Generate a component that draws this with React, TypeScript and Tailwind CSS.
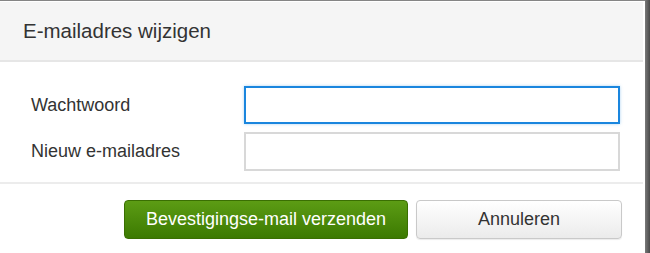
import React from "react";

export default function App() {
  const font = { fontFamily: '"Liberation Sans", Arial, sans-serif' };
  return (
    <div className="w-[650px] h-[253px] flex bg-white overflow-hidden" style={font}>
      <div className="w-[645px] h-full flex flex-col border-t border-[#858585] bg-white pr-[2px]">
        <div className="h-[60px] mt-[1px] bg-[#f5f5f5] border-b-2 border-[#e6e6e6] flex items-center pl-[23px]">
          <span className="text-[20.5px] text-[#333] leading-none">E-mailadres wijzigen</span>
        </div>
        <div className="pt-[24px] pl-[31px] pb-[11px] border-b-2 border-[#ececec] grid grid-cols-[213px_376px] gap-y-[8px] items-center">
          <label className="text-[18px] text-[#333]">Wachtwoord</label>
          <input
            type="password"
            className="h-[38px] w-[376px] border-2 border-[#1a86de] outline-none shadow-[0_0_3px_rgba(26,134,222,0.35)] bg-white"
          />
          <label className="text-[18px] text-[#333]">Nieuw e-mailadres</label>
          <input
            type="text"
            className="h-[39px] w-[376px] border-2 border-[#d8d8d8] outline-none bg-white"
          />
        </div>
        <div className="flex justify-end gap-[8px] pt-[16px] pr-[21px]">
          <button className="h-[39px] w-[284px] rounded-[4px] border border-[#3a6f02] bg-gradient-to-b from-[#5c9c14] to-[#3c7a02] text-white text-[18px]">
            Bevestigingse-mail verzenden
          </button>
          <button className="h-[39px] w-[206px] rounded-[4px] border border-[#c9c9c9] bg-gradient-to-b from-white to-[#ebebeb] text-[#333] text-[18px] shadow-[0_1px_1px_rgba(0,0,0,0.08)]">
            Annuleren
          </button>
        </div>
      </div>
      <div className="w-[5px] h-full bg-gradient-to-r from-[#7a7a7a] to-[#4a4a4a]" />
    </div>
  );
}
